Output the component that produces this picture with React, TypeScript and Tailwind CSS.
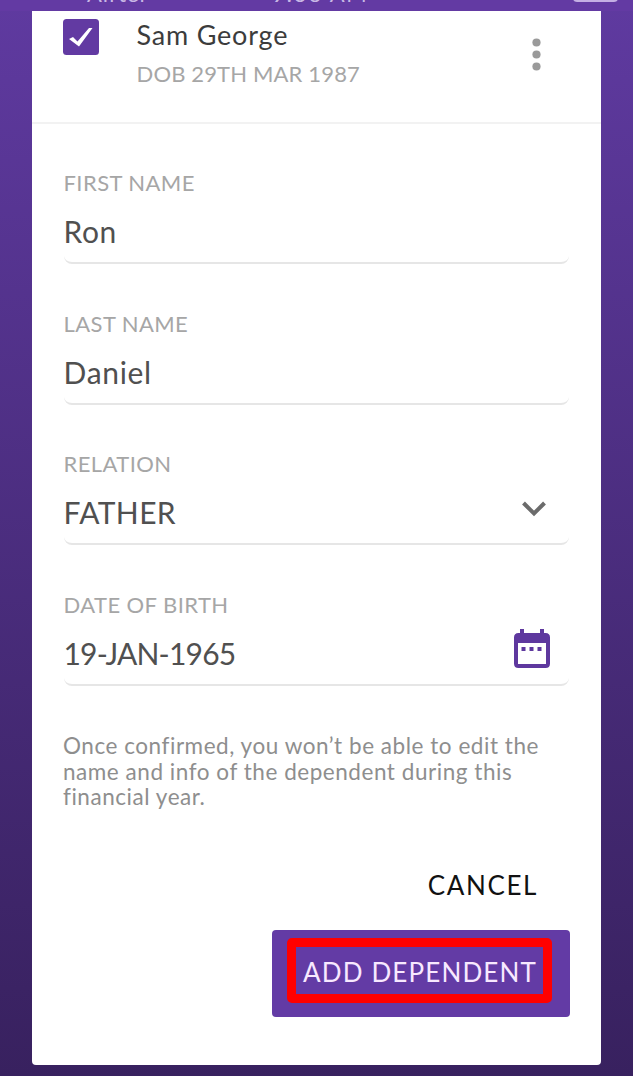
import type { ReactNode } from "react";

function Field({ label, value, valueClass, icon }: { label: string; value: string; valueClass: string; icon?: ReactNode }) {
  return (
    <div className="h-[140.7px]">
      <div className="-ml-[0.5px] h-[24px] whitespace-nowrap text-[22px] leading-[24px] tracking-[0.42px] text-[#a6a6a6]">{label}</div>
      <div className="mt-[7px] flex h-[62px] items-start justify-between rounded-[8px] border-b-2 border-[#e6e6e6] pr-[19px]">
        <span className={"-ml-[0.5px] mt-[11px] whitespace-nowrap text-[30px] leading-[36px] text-[#505050] " + valueClass}>{value}</span>
        {icon}
      </div>
    </div>
  );
}

export default function App() {
  return (
    <div className="h-[1076px] w-[633px] overflow-hidden bg-linear-to-b from-[#5f3aa0] to-[#38215f] font-['Lato','Noto_Sans',sans-serif]">
      <header className="relative h-[11px] overflow-hidden bg-[#633aa3] text-[22px] leading-[24px] text-[#c9b8e6]">
        <span className="absolute left-[87px] -top-[18px] tracking-[1px]">Airtel</span>
        <span className="absolute left-[272px] -top-[18px] whitespace-nowrap tracking-[1.8px]">9:36 AM</span>
        <span className="absolute left-[573px] -top-[18px] h-[20px] w-[45px] rounded-[4px] bg-[#c4afe4]" />
      </header>
      <main className="ml-[32px] flex h-[1054px] w-[569px] flex-col rounded-b-[4px] bg-white">
        <section className="flex h-[113px] shrink-0 items-start border-b-2 border-[#f2f2f2] pl-[31px] pr-[60.5px]">
          <svg className="mt-[8px] shrink-0" width="36" height="36" viewBox="0 0 36 36">
            <rect width="36" height="36" rx="3.5" fill="#623aa2" />
            <path d="M6 20 L10 18 L14.500 22.500 L26 9 L29.500 9 L16 27.500 Z" fill="white" />
          </svg>
          <div className="ml-[37.5px] flex-1 whitespace-nowrap">
            <div className="mt-[6px] text-[27px] leading-[36px] tracking-[0.8px] text-[#3c3c3c]">Sam George</div>
            <div className="mt-[8px] text-[22px] leading-[26px] tracking-[0.15px] text-[#a6a6a6]">DOB 29TH MAR 1987</div>
          </div>
          <svg className="mt-[27px]" width="9" height="34" viewBox="0 0 9 34" fill="#9a9a9a">
            <circle cx="4.5" cy="4.5" r="4.1" />
            <circle cx="4.5" cy="16.5" r="4.1" />
            <circle cx="4.5" cy="28.5" r="4.1" />
          </svg>
        </section>
        <section className="h-[609px] shrink-0 pl-[32px] pr-[32px] pt-[47px]">
          <Field label="FIRST NAME" value="Ron" valueClass="tracking-[0.6px]" />
          <Field label="LAST NAME" value="Daniel" valueClass="tracking-[0.7px]" />
          <Field
            label="RELATION"
            value="FATHER"
            valueClass="tracking-[0.4px]"
            icon={
              <svg className="mr-[4px] mt-[18px]" width="24" height="16" viewBox="0 0 24 16" fill="none" stroke="#6b6b6b" strokeWidth="4">
                <path d="M1.5 2 L12 12.5 L22.5 2" />
              </svg>
            }
          />
          <Field
            label="DATE OF BIRTH"
            value="19-JAN-1965"
            valueClass="tracking-[-0.8px]"
            icon={
              <svg className="mt-[4px]" width="36" height="41" viewBox="0 0 36 41" fill="#5e389e">
                <path fillRule="evenodd" d="M6 1h4v4h16V1h4v4h1.500q4.500 0 4.500 4.500v26q0 4.500-4.500 4.500h-27Q0 40 0 35.500v-26Q0 5 4.500 5H6zM4 15v21h28V15z" />
                <path d="M7.500 19h4v4h-4zM15.500 19h4v4h-4zM23.500 19h4v4h-4z" />
              </svg>
            }
          />
        </section>
        <p className="pl-[31px] text-[22.5px] leading-[25.7px] tracking-[0.54px] text-[#8e8e8e]">
          <span className="block whitespace-nowrap">Once confirmed, you won’t be able to edit the</span>
          <span className="block whitespace-nowrap">name and info of the dependent during this</span>
          <span className="block whitespace-nowrap">financial year.</span>
        </p>
        <button className="mr-[63px] mt-[59px] self-end text-[26px] leading-[32px] tracking-[1.6px] text-[#111]">CANCEL</button>
        <button className="mr-[31px] mt-[29px] flex h-[87px] w-[298px] shrink-0 items-start self-end rounded-[4px] bg-[#633ba5] pl-[15px] pt-[8px]">
          <span className="flex h-[65px] w-[265px] items-center justify-center whitespace-nowrap rounded-[5px] border-[9px] border-[#ff0000] pt-[3px] pl-px text-[26px] tracking-[1.15px] text-[#f8e8ff]">ADD DEPENDENT</span>
        </button>
      </main>
    </div>
  );
}
